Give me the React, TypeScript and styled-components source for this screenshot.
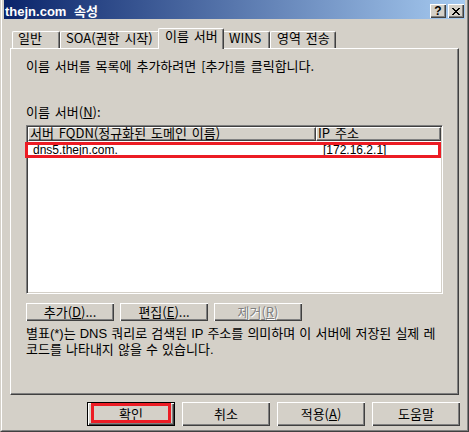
import React from 'react';
import styled, { createGlobalStyle, css } from 'styled-components';

const GlobalStyle = createGlobalStyle`
  html, body { margin: 0; padding: 0; }
  body {
    background: #d4d0c8;
    font-family: "Noto Sans CJK KR", "Liberation Sans", sans-serif;
    font-size: 13px;
    word-spacing: 2px;
    color: #000;
  }
  *, *::before, *::after { box-sizing: border-box; }
`;

const Window = styled.div`
  width: 469px;
  height: 432px;
  background: #d4d0c8;
  border-left: 1px solid #d4d0c8;
  border-right: 1px solid #404040;
  border-bottom: 1px solid #404040;
  display: flex;
  flex-direction: column;
`;

const Frame = styled.div`
  flex: 1;
  display: flex;
  flex-direction: column;
  border-left: 1px solid #ffffff;
  border-right: 1px solid #808080;
  border-bottom: 1px solid #808080;
  padding: 0 2px;
`;

const TitleBar = styled.div`
  flex: none;
  height: 19px;
  display: flex;
  align-items: flex-start;
  background: linear-gradient(to right, #0a246a, #a6caf0);
  padding: 0 1px 0 1px;
`;

const TitleText = styled.div`
  flex: 1;
  margin-top: 4px;
  color: #fff;
  font-family: "Liberation Sans", "Noto Sans CJK KR", sans-serif;
  font-weight: bold;
  font-size: 13px;
  line-height: 15px;
  word-spacing: 4px;
  white-space: nowrap;
`;

const CaptionButtons = styled.div`
  display: flex;
  gap: 2px;
  margin-top: 4px;
`;

const CaptionButton = styled.div`
  width: 16px;
  height: 14px;
  background: #d4d0c8;
  box-shadow: inset 1px 1px 0 #ffffff, inset -1px -1px 0 #404040, inset -2px -2px 0 #808080;
  display: flex;
  align-items: center;
  justify-content: center;
  font-family: "Liberation Sans", sans-serif;
  font-weight: bold;
  font-size: 12px;
  line-height: 12px;
  color: #000;
`;

const Body = styled.div`
  flex: 1;
  display: flex;
  flex-direction: column;
  padding: 9px 5px 0 6px;
`;

const TabStrip = styled.div`
  flex: none;
  height: 20px;
  display: flex;
  align-items: flex-end;
  padding-left: 2px;
`;

const Tab = styled.div<{ $active?: boolean; $w: number; $pad: number }>`
  flex: none;
  width: ${(p) => p.$w}px;
  height: 17px;
  padding-left: ${(p) => p.$pad}px;
  background: #d4d0c8;
  border-top: 1px solid #ffffff;
  border-left: 1px solid #ffffff;
  border-right: 1px solid #404040;
  border-radius: 2px 2px 0 0;
  box-shadow: inset -1px 0 0 #808080;
  line-height: 12px;
  white-space: nowrap;
  ${(p) =>
    p.$active &&
    css`
      height: 21px;
      margin: 0 -2px -1px -2px;
      padding-top: 1px;
      position: relative;
      z-index: 1;
    `}
`;

const Panel = styled.div`
  flex: none;
  width: 449px;
  height: 347px;
  border-top: 1px solid #ffffff;
  border-left: 1px solid #ffffff;
  border-right: 1px solid #404040;
  border-bottom: 1px solid #404040;
  box-shadow: inset -1px -1px 0 #808080;
  padding: 10px 15px 0 15px;
  display: flex;
  flex-direction: column;
`;

const Text = styled.div<{ $mt?: number; $lh?: number }>`
  margin-top: ${(p) => p.$mt ?? 0}px;
  line-height: ${(p) => p.$lh ?? 14}px;
  white-space: nowrap;
`;

const Note = styled.div`
  margin-top: 5px;
  font-family: "Liberation Sans", "Noto Sans CJK KR", sans-serif;
  line-height: 16px;
  word-spacing: 0.5px;
  white-space: nowrap;
`;

const U = styled.span`
  text-decoration: underline;
  text-underline-offset: 1px;
`;

const ListBox = styled.div`
  position: relative;
  margin-top: 6px;
  width: 417px;
  height: 169px;
  flex: none;
  background: #ffffff;
  border-top: 1px solid #808080;
  border-left: 1px solid #808080;
  border-right: 1px solid #ffffff;
  border-bottom: 1px solid #ffffff;
  box-shadow: inset 1px 1px 0 #404040, inset -1px -1px 0 #d4d0c8;
  padding: 1px;
`;

const HeaderRow = styled.div`
  display: flex;
  height: 14px;
`;

const HeaderCell = styled.div<{ $w?: number }>`
  ${(p) => (p.$w ? `width: ${p.$w}px; flex: none;` : 'flex: 1;')}
  background: #d4d0c8;
  border-top: 1px solid #ffffff;
  border-left: 1px solid #ffffff;
  border-bottom: 1px solid #404040;
  border-right: 1px solid #404040;
  box-shadow: inset -1px -1px 0 #808080;
  padding-left: 1px;
  line-height: 10px;
  white-space: nowrap;
`;

const ItemRow = styled.div`
  display: flex;
  padding-top: 3px;
  font-family: "Liberation Sans", "Noto Sans CJK KR", sans-serif;
  font-size: 12px;
  line-height: 13px;
  word-spacing: 0;
`;

const ItemCell = styled.div<{ $w?: number; $pad: number }>`
  ${(p) => (p.$w ? `width: ${p.$w}px; flex: none;` : 'flex: 1;')}
  padding-left: ${(p) => p.$pad}px;
  white-space: nowrap;
`;

const Highlight = styled.div<{ $l: number; $t: number; $w: number; $h: number }>`
  position: absolute;
  left: ${(p) => p.$l}px;
  top: ${(p) => p.$t}px;
  width: ${(p) => p.$w}px;
  height: ${(p) => p.$h}px;
  border: 3px solid #ec1c24;
  pointer-events: none;
`;

const ButtonRow = styled.div<{ $gap: number; $mt: number; $end?: boolean }>`
  display: flex;
  gap: ${(p) => p.$gap}px;
  margin-top: ${(p) => p.$mt}px;
  justify-content: ${(p) => (p.$end ? 'flex-end' : 'flex-start')};
  flex: none;
`;

const PushButton = styled.div<{ $h: number; $default?: boolean; $disabled?: boolean }>`
  position: relative;
  width: 88px;
  height: ${(p) => p.$h}px;
  background: #d4d0c8;
  box-shadow: inset 1px 1px 0 #ffffff, inset -1px -1px 0 #404040, inset -2px -2px 0 #808080;
  display: flex;
  align-items: center;
  justify-content: center;
  line-height: 14px;
  white-space: nowrap;
  ${(p) =>
    p.$default &&
    css`
      border: 1px solid #000;
    `}
  ${(p) =>
    p.$disabled &&
    css`
      color: #808080;
      text-shadow: 1px 1px 0 #ffffff;
    `}
`;

const CloseGlyph = () => (
  <svg width="8" height="7" viewBox="0 0 8 7" shapeRendering="crispEdges">
    <path
      fill="#000"
      d="M0 0h2v1H0zM6 0h2v1H6zM1 1h2v1H1zM5 1h2v1H5zM2 2h4v1H2zM3 3h2v1H3zM2 4h4v1H2zM1 5h2v1H1zM5 5h2v1H5zM0 6h2v1H0zM6 6h2v1H6z"
    />
  </svg>
);

export default function App() {
  return (
    <>
      <GlobalStyle />
      <Window>
        <Frame>
          <TitleBar>
            <TitleText>thejn.com 속성</TitleText>
            <CaptionButtons>
              <CaptionButton>?</CaptionButton>
              <CaptionButton>
                <CloseGlyph />
              </CaptionButton>
            </CaptionButtons>
          </TitleBar>
          <Body>
            <TabStrip>
              <Tab $w={48} $pad={5}>일반</Tab>
              <Tab $w={100} $pad={5}>SOA(권한 시작)</Tab>
              <Tab $w={66} $pad={6} $active>이름 서버</Tab>
              <Tab $w={48} $pad={6}>WINS</Tab>
              <Tab $w={66} $pad={6}>영역 전송</Tab>
            </TabStrip>
            <Panel>
              <Text>이름 서버를 목록에 추가하려면 [추가]를 클릭합니다.</Text>
              <Text $mt={32}>
                이름 서버(<U>N</U>):
              </Text>
              <ListBox>
                <HeaderRow>
                  <HeaderCell $w={288}>서버 FQDN(정규화된 도메인 이름)</HeaderCell>
                  <HeaderCell>IP 주소</HeaderCell>
                </HeaderRow>
                <ItemRow>
                  <ItemCell $w={288} $pad={5}>dns5.thejn.com.</ItemCell>
                  <ItemCell $pad={7}>[172.16.2.1]</ItemCell>
                </ItemRow>
                <Highlight $l={-2} $t={16} $w={416} $h={16} />
              </ListBox>
              <ButtonRow $gap={6} $mt={9}>
                <PushButton $h={18}>
                  추가(<U>D</U>)...
                </PushButton>
                <PushButton $h={18}>
                  편집(<U>E</U>)...
                </PushButton>
                <PushButton $h={18} $disabled>
                  제거(<U>R</U>)
                </PushButton>
              </ButtonRow>
              <Note>
                별표(*)는 DNS 쿼리로 검색된 IP 주소를 의미하며 이 서버에 저장된 실제 레
                <br />
                코드를 나타내지 않을 수 있습니다.
              </Note>
            </Panel>
            <ButtonRow $gap={7} $mt={7} $end>
              <PushButton $h={24} $default>
                확인
                <Highlight $l={3} $t={0} $w={80} $h={20} />
              </PushButton>
              <PushButton $h={24}>취소</PushButton>
              <PushButton $h={24}>
                적용(<U>A</U>)
              </PushButton>
              <PushButton $h={24}>도움말</PushButton>
            </ButtonRow>
          </Body>
        </Frame>
      </Window>
    </>
  );
}
